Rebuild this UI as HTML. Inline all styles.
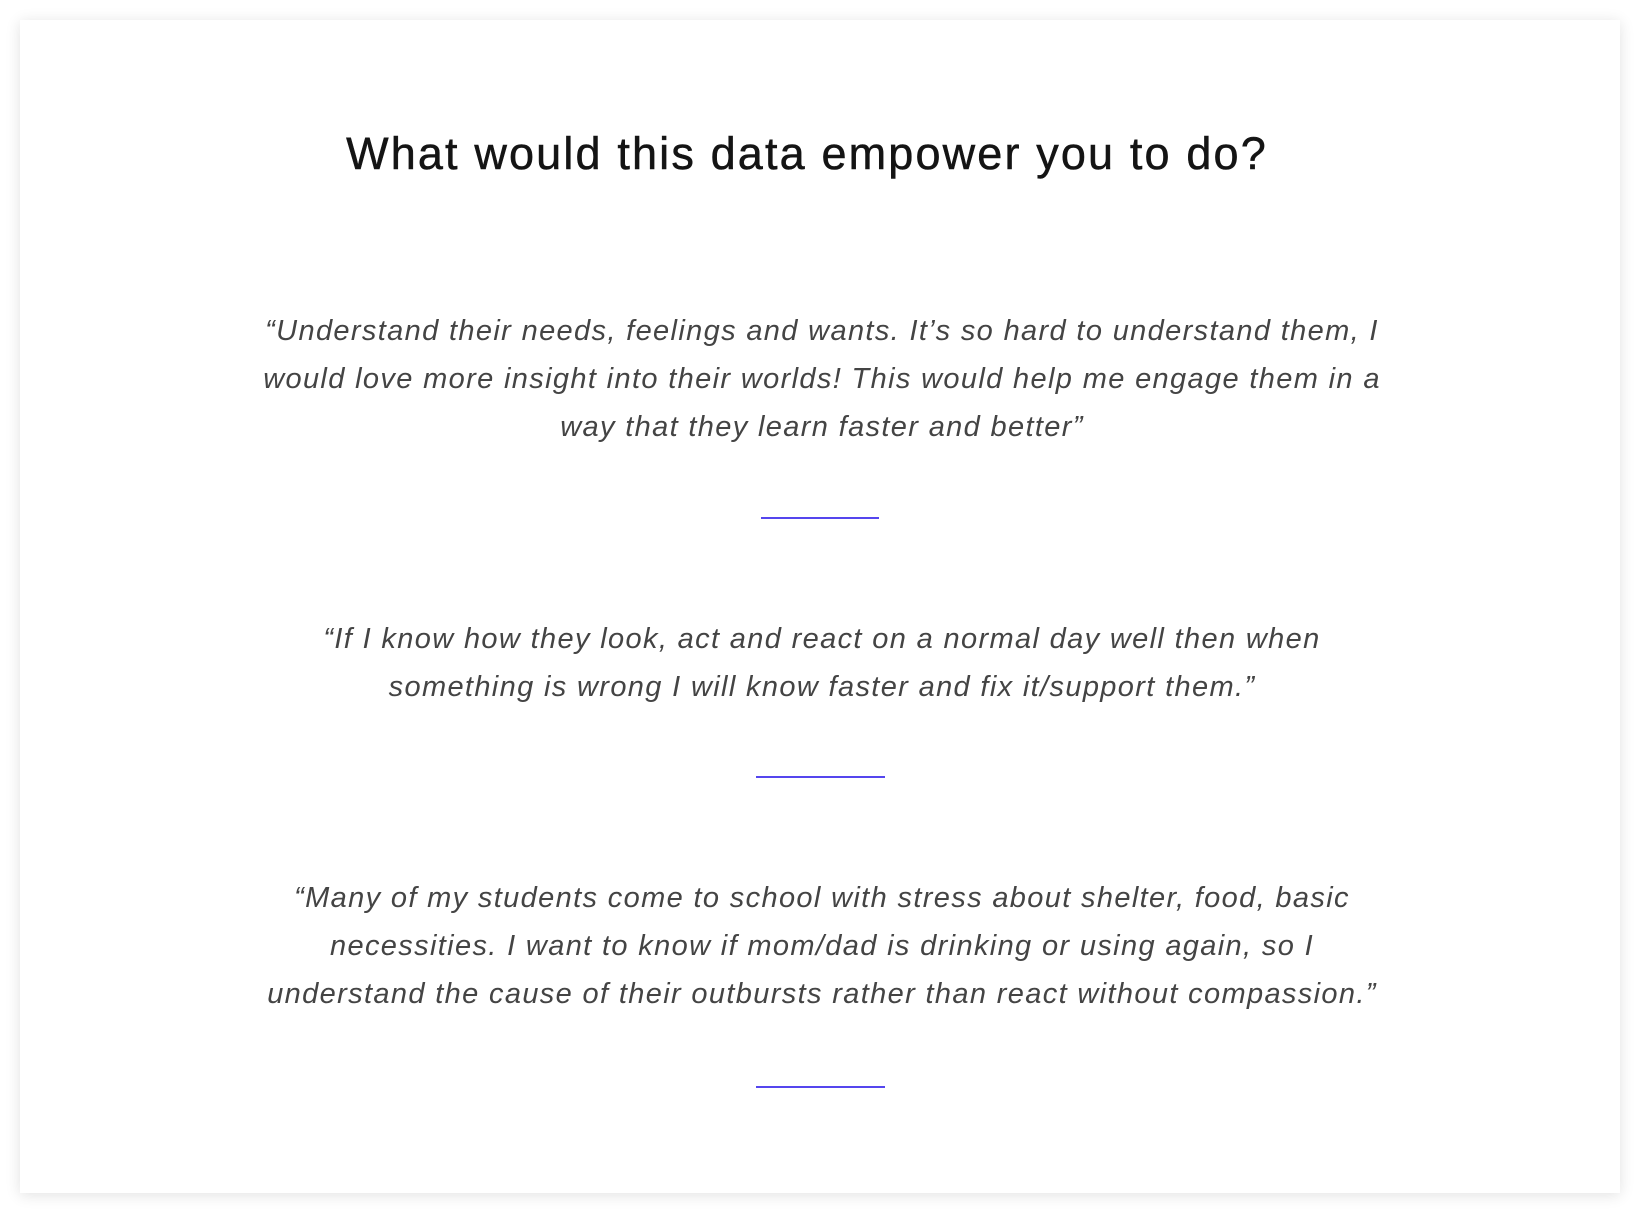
<!DOCTYPE html>
<html><head><meta charset="utf-8"><style>
html,body{margin:0;padding:0;background:#fff;width:1644px;height:1218px;overflow:hidden}
.card{position:absolute;left:20px;top:20px;width:1600px;height:1173px;background:#fff;box-shadow:0 2px 14px rgba(0,0,0,0.12)}
.h{position:absolute;left:-15px;width:1644px;top:127px;text-align:center;font-family:"Liberation Sans",sans-serif;font-size:45px;line-height:54px;color:#141414;letter-spacing:2.15px;-webkit-text-stroke:0.5px #141414}
.q{position:absolute;left:0;width:1644px;text-align:center;font-family:"Liberation Sans",sans-serif;font-style:italic;font-size:29px;line-height:48px;color:#444;white-space:nowrap;letter-spacing:1.35px}
.ln{position:absolute;height:2px;background:#5546ee}
</style></head><body>
<div class="card"></div>
<div class="h">What would this data empower you to do?</div>
<div class="q" style="top:307px">“Understand their needs, feelings and wants. It’s so hard to understand them, I<br>would love more insight into their worlds! This would help me engage them in a<br>way that they learn faster and better”</div>
<div class="ln" style="left:761px;width:118px;top:517px"></div>
<div class="q" style="top:615px">“If I know how they look, act and react on a normal day well then when<br>something is wrong I will know faster and fix it/support them.”</div>
<div class="ln" style="left:756px;width:129px;top:776px"></div>
<div class="q" style="top:874px">“Many of my students come to school with stress about shelter, food, basic<br>necessities. I want to know if mom/dad is drinking or using again, so I<br>understand the cause of their outbursts rather than react without compassion.”</div>
<div class="ln" style="left:756px;width:129px;top:1086px"></div>
</body></html>
